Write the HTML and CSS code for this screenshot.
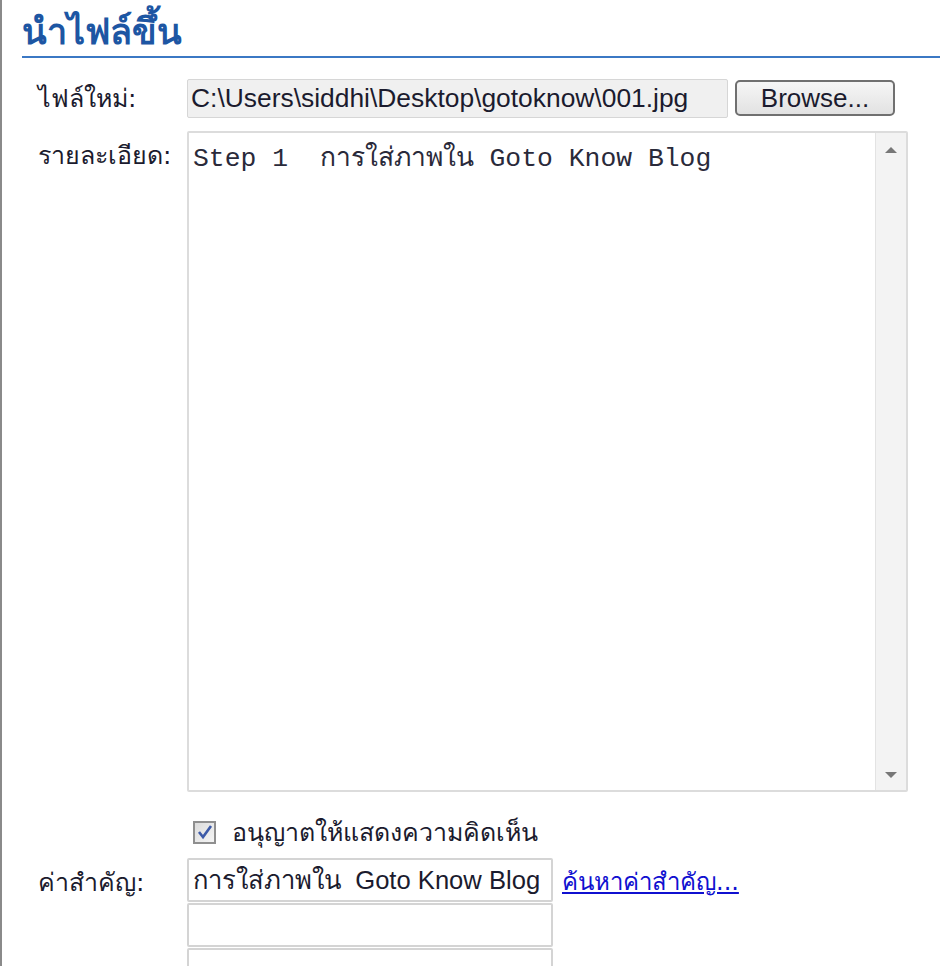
FILE: index.html
```html
<!DOCTYPE html>
<html>
  <head>
    <link rel="stylesheet" href="styles.css">
    <meta charset="utf-8" />
    <title>นำไฟล์ขึ้น</title>
  </head>
  <body>
    <div class="panel">
      <h2 class="title">นำไฟล์ขึ้น</h2>

      <div class="row fileRow">
        <div class="label">ไฟล์ใหม่:</div>
        <div class="filePath">C:\Users\siddhi\Desktop\gotoknow\001.jpg</div>
        <button class="browse">Browse...</button>
      </div>

      <div class="row detailRow">
        <div class="label">รายละเอียด:</div>
        <div class="textBox">
          <div class="textContent">Step 1  การใส่ภาพใน Goto Know Blog</div>
          <div class="scrollbar">
            <span class="arrow up"></span>
            <span class="arrow down"></span>
          </div>
        </div>
      </div>

      <div class="row checkRow">
        <div class="label"></div>
        <span class="checkbox">
          <svg width="18" height="18" viewBox="0 0 18 18">
            <path d="M3 9 L7 14 L15 3" fill="none" stroke="#3d5aa8" stroke-width="2.6" />
          </svg>
        </span>
        <span class="checkText">อนุญาตให้แสดงความคิดเห็น</span>
      </div>

      <div class="row keyRow">
        <div class="label">ค่าสำคัญ:</div>
        <div class="keyInputs">
          <div class="keyInput">การใส่ภาพใน  Goto Know Blog</div>
          <div class="keyInput"></div>
          <div class="keyInput"></div>
        </div>
        <a class="findLink" href="#">ค้นหาค่าสำคัญ...</a>
      </div>
    </div>
  </body>
</html>
```

FILE: styles.css
```css
body {
  margin: 0;
  font-family: "DejaVu Sans", "Noto Sans", sans-serif;
  color: #1b1b2e;
  background: #fff;
  overflow: hidden;
}

.panel {
  border-left: 2px solid #8a8a8a;
  padding-left: 20px;
  height: 966px;
}

.title {
  margin: 0;
  padding-top: 8px;
  padding-bottom: 0;
  font-size: 36px;
  line-height: 48px;
  font-weight: bold;
  color: #1d56a3;
  border-bottom: 2px solid #3b78c4;
}

.row {
  display: flex;
  align-items: flex-start;
}

.label {
  width: 165px;
  flex-shrink: 0;
  padding-left: 16px;
  box-sizing: border-box;
  font-size: 25px;
}

.fileRow {
  margin-top: 20px;
  align-items: center;
}

.fileRow .label {
  align-self: flex-start;
  padding-top: 0;
}

.filePath {
  width: 541px;
  height: 39px;
  box-sizing: border-box;
  border: 1px solid #d6d6d6;
  border-radius: 2px;
  background: #f0f0f0;
  font-family: "Liberation Sans", Arial, sans-serif;
  font-size: 26.4px;
  line-height: 37px;
  padding-left: 3px;
  white-space: nowrap;
  overflow: hidden;
}

.browse {
  margin-left: 7px;
  width: 160px;
  height: 36px;
  border: 2px solid #707070;
  border-radius: 5px;
  background: linear-gradient(#f6f6f6, #e2e2e2);
  font-family: "Liberation Sans", Arial, sans-serif;
  font-size: 26px;
  line-height: 30px;
  color: #1b1b2e;
  padding: 0;
}

.detailRow {
  margin-top: 13px;
}

.detailRow .label {
  padding-top: 4px;
}

.textBox {
  display: flex;
  width: 721px;
  height: 661px;
  box-sizing: border-box;
  border: 2px solid #dcdcdc;
  border-radius: 2px;
}

.textContent {
  flex: 1;
  padding: 3px 4px;
  font-family: "Liberation Mono", "Courier New", monospace;
  font-size: 26.4px;
  color: #2a2a3a;
  white-space: pre;
}

.scrollbar {
  width: 30px;
  display: flex;
  flex-direction: column;
  justify-content: space-between;
  align-items: center;
  background: #f3f3f3;
  border-left: 1px solid #e3e3e3;
  padding: 14px 0 12px;
}

.arrow {
  width: 0;
  height: 0;
  border-left: 6px solid transparent;
  border-right: 6px solid transparent;
}

.arrow.up {
  border-bottom: 6px solid #777;
}

.arrow.down {
  border-top: 6px solid #777;
}

.checkRow {
  margin-top: 20px;
  align-items: center;
}

.checkbox {
  margin-left: 6px;
  width: 23px;
  height: 23px;
  box-sizing: border-box;
  border: 2px solid #8f8f8f;
  background: linear-gradient(135deg, #dcdcdc, #f4f4f4);
  display: flex;
  align-items: center;
  justify-content: center;
}

.checkText {
  margin-left: 16px;
  font-size: 25px;
}

.keyRow {
  margin-top: 6px;
}

.keyRow .label {
  padding-top: 4px;
}

.keyInputs {
  display: flex;
  flex-direction: column;
}

.keyInput {
  width: 366px;
  height: 44px;
  box-sizing: border-box;
  border: 2px solid #d4d4d4;
  border-radius: 2px;
  font-family: "Liberation Sans", Arial, sans-serif;
  font-size: 25.6px;
  line-height: 40px;
  padding-left: 4px;
  white-space: pre;
  overflow: hidden;
}

.keyInput + .keyInput {
  margin-top: 1px;
}

.findLink {
  margin-left: 9px;
  margin-top: 4px;
  font-size: 24px;
  color: #1010d0;
}
```
